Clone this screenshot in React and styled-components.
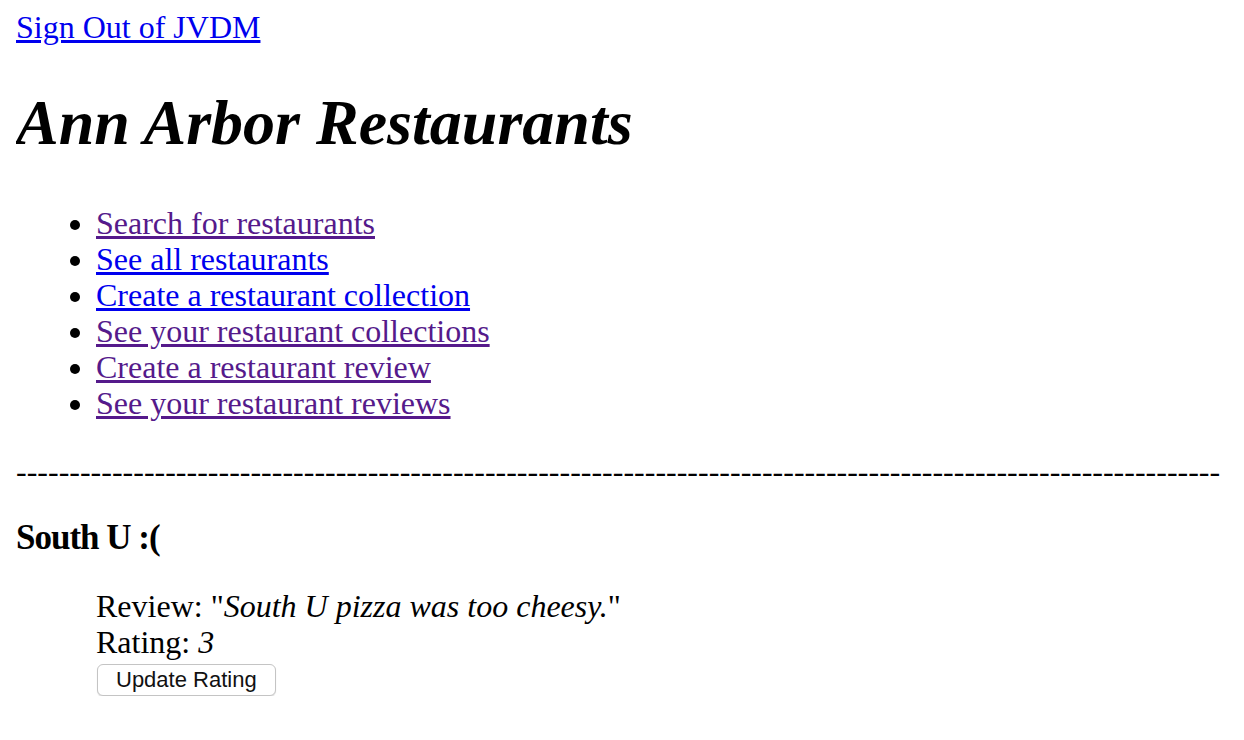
import React from "react"
import styled, { createGlobalStyle } from 'styled-components'

const GlobalStyle = createGlobalStyle`
  body {
    margin: 9px 16px 16px;
    background: #fff;
    color: #000;
    font-family: "Liberation Serif", "Times New Roman", serif;
    font-size: 32px;
    line-height: 36px;
  }
`;

const Link = styled.a`
  color: ${props => props.visited ? '#551a8b' : '#0000ee'};
  text-decoration: underline;
  cursor: pointer;
`;

const Title = styled.h1`
  margin: 42px 0 46px;
  font-size: 64px;
  line-height: 72px;
  font-style: italic;
  font-weight: bold;
`;

const Menu = styled.ul`
  margin: 32px 0;
  padding-left: 80px;
  list-style: disc;
`;

const Divider = styled.div`
  margin: 32px 0 0;
  white-space: nowrap;
  overflow: hidden;
`;

const PlaceName = styled.h3`
  margin: 28px 0 29px;
  font-size: 35px;
  line-height: 42px;
  font-weight: bold;
  letter-spacing: -1px;
`;

const Review = styled.div`
  padding-left: 80px;
`;

const Button = styled.button`
  display: block;
  margin: 4px 0 0 1px;
  height: 32px;
  padding: 0 18px;
  border: 1px solid #c4c4c4;
  border-radius: 6px;
  background: #fff;
  box-shadow: 0 1px 1px rgba(0, 0, 0, 0.12);
  color: #111;
  font-family: "Liberation Sans", Arial, sans-serif;
  font-size: 22px;
  line-height: 30px;
  cursor: pointer;
`;

const links = [
  { label: 'Search for restaurants', visited: true },
  { label: 'See all restaurants' },
  { label: 'Create a restaurant collection' },
  { label: 'See your restaurant collections', visited: true },
  { label: 'Create a restaurant review', visited: true },
  { label: 'See your restaurant reviews', visited: true },
];

const App = () => (
  <>
    <GlobalStyle />
    <div><Link>Sign Out of JVDM</Link></div>
    <Title>Ann Arbor Restaurants</Title>
    <Menu>
      {links.map(link => (
        <li key={link.label}><Link visited={link.visited}>{link.label}</Link></li>
      ))}
    </Menu>
    <Divider>{'-'.repeat(113)}</Divider>
    <PlaceName>South U :(</PlaceName>
    <Review>
      <div>Review: "<i>South U pizza was too cheesy.</i>"</div>
      <div>Rating: <i>3</i></div>
      <Button>Update Rating</Button>
    </Review>
  </>
)

export default App
